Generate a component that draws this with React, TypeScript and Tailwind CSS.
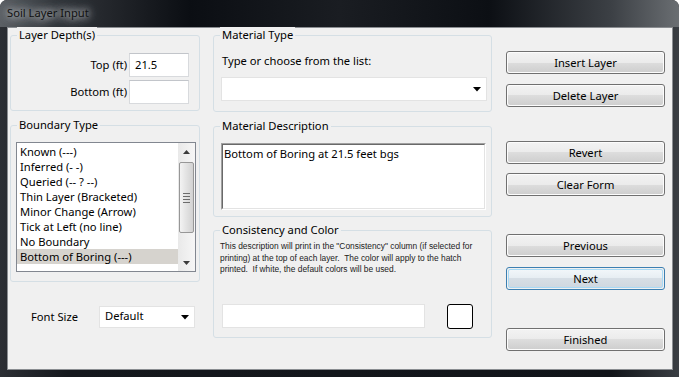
import React from "react";

const Arrow = () => (
  <svg width="8" height="5" viewBox="0 0 8 5" className="block">
    <path d="M0 0h8L4 4.5z" fill="#000" />
  </svg>
);

function Btn({ label, def }: { label: string; def?: boolean }) {
  if (def) {
    return (
      <div className="h-[23px] rounded-[3px] border border-[#3c7fb1] p-px">
        <div className="h-full rounded-[2px] border border-[#a7d9f5] bg-[linear-gradient(#f1f6f9_0%,#e6edf2_50%,#d6dee5_50%,#cfd8e0_100%)] flex items-center justify-center leading-none">
          {label}
        </div>
      </div>
    );
  }
  return (
    <div className="h-[23px] rounded-[3px] border border-[#707070] p-px bg-[#fcfcfc]">
      <div className="h-full rounded-[2px] bg-[linear-gradient(#f2f2f2_0%,#ebebeb_50%,#dddddd_50%,#cfcfcf_100%)] flex items-center justify-center leading-none">
        {label}
      </div>
    </div>
  );
}

function Group({
  title,
  className,
  children,
}: {
  title: string;
  className: string;
  children?: React.ReactNode;
}) {
  return (
    <div className={"rounded-[3px] border border-[#d5dfe5] flex flex-col " + className}>
      <div className="-mt-[9px] ml-[6px] w-fit px-[2px] bg-[#f0f0f0] h-[16px] leading-[16px]">
        {title}
      </div>
      {children}
    </div>
  );
}

const items = [
  "Known (---)",
  "Inferred (- -)",
  "Queried (-- ? --)",
  "Thin Layer (Bracketed)",
  "Minor Change (Arrow)",
  "Tick at Left (no line)",
  "No Boundary",
  "Bottom of Boring (---)",
];

export default function App() {
  return (
    <div className="w-[679px] h-[377px] bg-white font-['Segoe_UI','Noto_Sans',sans-serif] text-[11.2px] text-black">
      <div className="w-[679px] h-[377px] rounded-t-[7px] overflow-hidden flex flex-col bg-[#16191e]">
        {/* title bar */}
        <div className="h-[27px] shrink-0 flex items-center pl-[7px] pb-[1px] bg-[linear-gradient(90deg,#5b5f64_0%,#33363b_8%,#0b0e13_28%,#1a1d22_50%,#0c0f14_72%,#3c4045_90%,#6a6e72_100%)]">
          <span className="text-[#111] [text-shadow:0_0_6px_#c9cccf,0_0_10px_#c9cccf,0_0_14px_#a9acaf]">
            Soil Layer Input
          </span>
        </div>
        {/* body */}
        <div className="flex-1 flex pl-[7px] pr-[6px] pb-[7px] bg-[linear-gradient(90deg,#2c2f34_0%,#15181d_10%,#111419_90%,#3a3e43_100%)]">
          <div className="w-[666px] h-[343px] bg-[#f0f0f0] border border-[#8a8d91] flex pt-[7px] pl-[2px]">
            {/* left column */}
            <div className="w-[190px] flex flex-col">
              <Group title="Layer Depth(s)" className="h-[76px]">
                <div className="mt-[10px] flex flex-col gap-[3px] pr-[10px]">
                  <div className="flex items-center justify-end gap-[2px]">
                    <span>Top (ft)</span>
                    <div className="w-[60px] h-[24px] bg-white border border-[#d8dadd] border-t-[#c2c5ca] pl-[5px] leading-[21px]">
                      21.5
                    </div>
                  </div>
                  <div className="flex items-center justify-end gap-[2px]">
                    <span>Bottom (ft)</span>
                    <div className="w-[60px] h-[24px] bg-white border border-[#d8dadd] border-t-[#c2c5ca]" />
                  </div>
                </div>
              </Group>
              <Group title="Boundary Type" className="h-[157px] mt-[14px]">
                <div className="mt-[9px] ml-[5px] w-[180px] h-[130px] border border-[#828790] bg-white flex">
                  <div className="flex-1 pt-px">
                    {items.map((it, i) => (
                      <div
                        key={it}
                        className={
                          "h-[15px] leading-[15px] pl-[3px] " +
                          (i === 7 ? "bg-[#d6d3ce]" : "")
                        }
                      >
                        {it}
                      </div>
                    ))}
                  </div>
                  <div className="w-[17px] bg-[linear-gradient(90deg,#e9e9e9,#f6f6f6)] flex flex-col items-center">
                    <div className="h-[17px] flex items-center justify-center">
                      <svg width="7" height="4" viewBox="0 0 7 4">
                        <path d="M0 4h7L3.5 0z" fill="#3c3c3c" />
                      </svg>
                    </div>
                    <div className="w-[15px] h-[71px] mt-[2px] rounded-[2px] border border-[#979797] bg-[linear-gradient(90deg,#f3f3f3,#e2e2e2_50%,#d2d2d2)] flex flex-col items-center justify-center gap-[2px]">
                      <div className="w-[7px] h-px bg-[#6c6c6c]" />
                      <div className="w-[7px] h-px bg-[#6c6c6c]" />
                      <div className="w-[7px] h-px bg-[#6c6c6c]" />
                      <div className="w-[7px] h-px bg-[#6c6c6c]" />
                    </div>
                    <div className="flex-1" />
                    <div className="h-[17px] flex items-center justify-center">
                      <svg width="7" height="4" viewBox="0 0 7 4">
                        <path d="M0 0h7L3.5 4z" fill="#3c3c3c" />
                      </svg>
                    </div>
                  </div>
                </div>
              </Group>
              <div className="mt-[24px] flex items-center">
                <span className="ml-[21px] w-[68px]">Font Size</span>
                <div className="w-[96px] h-[22px] bg-white border border-[#e3e3e3] flex items-center justify-between pl-[5px] pr-[5px]">
                  <span className="-mt-[2px]">Default</span>
                  <Arrow />
                </div>
              </div>
            </div>
            {/* middle column */}
            <div className="w-[279px] ml-[13px] flex flex-col">
              <Group title="Material Type" className="h-[77px]">
                <div className="mt-[10px] ml-[8px] leading-[16px]">Type or choose from the list:</div>
                <div className="mt-[8px] ml-[7px] w-[266px] h-[24px] bg-white border border-[#e3e3e3] flex items-center justify-end pr-[5px]">
                  <Arrow />
                </div>
              </Group>
              <Group title="Material Description" className="h-[91px] mt-[14px]">
                <div className="mt-[9px] ml-[7px] w-[265px] h-[67px] border border-[#a0a0a0] border-r-white border-b-white">
                  <div className="w-full h-full bg-white border border-[#696969] border-r-[#e3e3e3] border-b-[#e3e3e3] pl-[1px] leading-[18px]">
                    Bottom of Boring at 21.5 feet bgs
                  </div>
                </div>
              </Group>
              <Group title="Consistency and Color" className="h-[108px] mt-[13px]">
                <div className="mt-[3px] ml-[6px] text-[8.4px] leading-[11.5px] text-[#222] font-['Liberation_Sans',sans-serif] whitespace-nowrap">
                  <div>This description will print in the "Consistency" column (if selected for</div>
                  <div>printing) at the top of each layer.&nbsp; The color will apply to the hatch</div>
                  <div>printed.&nbsp; If white, the default colors will be used.</div>
                </div>
                <div className="mt-[28px] ml-[8px] flex items-center">
                  <div className="w-[203px] h-[24px] bg-white border border-[#e3e3e3]" />
                  <div className="ml-[22px] w-[26px] h-[25px] rounded-[3px] border border-black bg-white" />
                </div>
              </Group>
            </div>
            {/* right column */}
            <div className="w-[159px] ml-[14px] flex flex-col">
              <div className="mt-[16px]">
                <Btn label="Insert Layer" />
              </div>
              <div className="mt-[10px]">
                <Btn label="Delete Layer" />
              </div>
              <div className="mt-[34px]">
                <Btn label="Revert" />
              </div>
              <div className="mt-[9px]">
                <Btn label="Clear Form" />
              </div>
              <div className="mt-[38px]">
                <Btn label="Previous" />
              </div>
              <div className="mt-[10px]">
                <Btn label="Next" def />
              </div>
              <div className="mt-[38px]">
                <Btn label="Finished" />
              </div>
            </div>
          </div>
        </div>
      </div>
    </div>
  );
}
